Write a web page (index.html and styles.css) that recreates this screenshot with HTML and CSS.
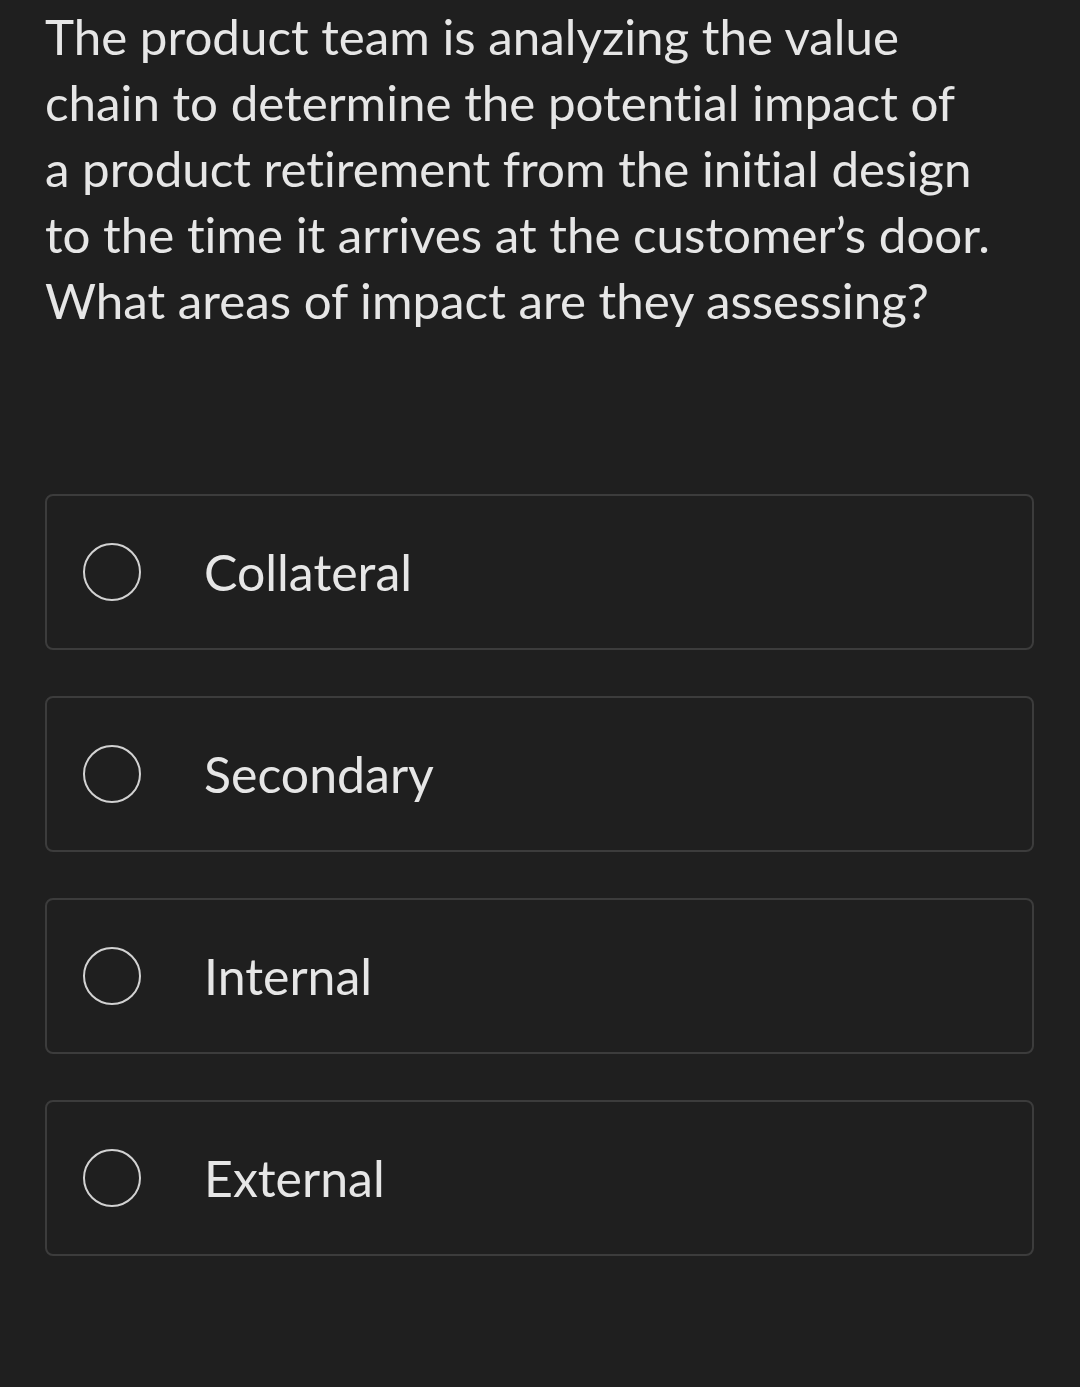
FILE: index.html
```html
<!DOCTYPE html>
<html lang="en">
<head>
<meta charset="utf-8">
<link rel="stylesheet" href="styles.css">
</head>
<body>
<main class="quiz">
  <p class="question">The product team is analyzing the value<br>chain to determine the potential impact of<br>a product retirement from the initial design<br>to the time it arrives at the customer’s door.<br>What areas of impact are they assessing?</p>
  <div class="options">
    <label class="option"><span class="radio"></span><span class="label">Collateral</span></label>
    <label class="option"><span class="radio"></span><span class="label">Secondary</span></label>
    <label class="option"><span class="radio"></span><span class="label">Internal</span></label>
    <label class="option"><span class="radio"></span><span class="label">External</span></label>
  </div>
</main>
</body>
</html>
```

FILE: styles.css
```css
html, body {
  margin: 0;
  padding: 0;
  background: #1f1f1f;
}
body {
  width: 1080px;
  height: 1387px;
  overflow: hidden;
  font-family: "Lato", "Noto Sans", sans-serif;
  font-variant-ligatures: none;
  color: #e6e6e6;
}
.quiz {
  padding: 3px 46px 0 45px;
}
.question {
  margin: 0;
  font-size: 49.3px;
  line-height: 66px;
  white-space: nowrap;
}
.options {
  margin-top: 161px;
  display: flex;
  flex-direction: column;
  gap: 46px;
}
.option {
  box-sizing: border-box;
  height: 156px;
  border: 2px solid #3c3c3c;
  border-radius: 8px;
  display: flex;
  align-items: center;
  padding-left: 36px;
}
.radio {
  box-sizing: border-box;
  width: 58px;
  height: 58px;
  border: 2px solid #d2d2d2;
  border-radius: 50%;
  flex: none;
}
.label {
  margin-left: 63px;
  font-size: 50px;
  color: #e6e6e6;
}
```
